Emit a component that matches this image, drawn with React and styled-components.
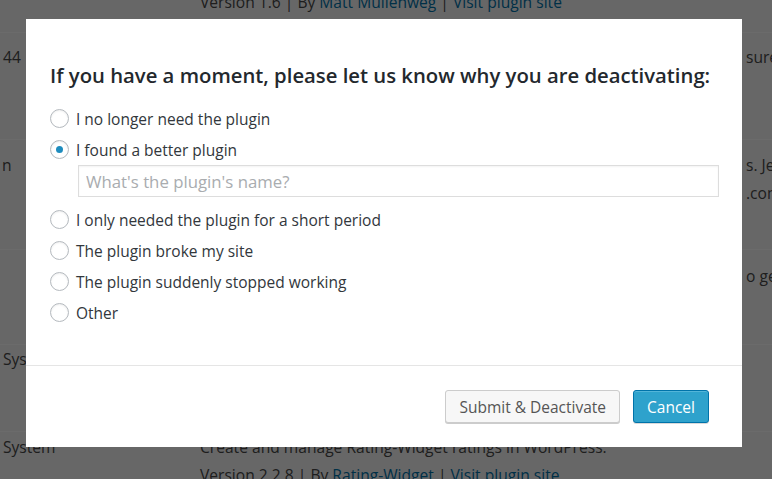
import React, { useState } from "react";
import styled, { createGlobalStyle } from "styled-components";

const GlobalStyle = createGlobalStyle`
  html, body {
    margin: 0;
    padding: 0;
    overflow: hidden;
    background-color: #f1f1f1;
  }
  * {
    box-sizing: border-box;
  }
`;

const reasons = [
  "I no longer need the plugin",
  "I found a better plugin",
  "I only needed the plugin for a short period",
  "The plugin broke my site",
  "The plugin suddenly stopped working",
  "Other",
];

// plugin table behind the modal backdrop
const rows = [
  { height: 33, top: -8, name: "", desc: [["Version 1.6 | By ", false], ["Matt Mullenweg", true], [" | ", false], ["Visit plugin site", true]], edge: [] },
  { height: 107, top: 14, name: "44", desc: [], edge: ["sure"] },
  { height: 110, top: 15, name: "n", nameShift: -1, desc: [], edge: ["s. Je", ".com"] },
  { height: 95, top: 16, name: "", desc: [], edge: ["o get"] },
  { height: 87, top: 4, name: "Sys", desc: [], edge: [] },
  { height: 60, top: 5, name: "System", desc: [["Create and manage Rating-Widget ratings in WordPress.", false]], desc2: [["Version 2.2.8 | By ", false], ["Rating-Widget", true], [" | ", false], ["Visit plugin site", true]], edge: [] },
];

function Segments({ parts }) {
  return parts.map(([t, link], j) => (link ? <PluginLink key={j}>{t}</PluginLink> : <span key={j}>{t}</span>));
}

export default function App() {
  const [choice, setChoice] = useState(1);

  return (
    <Page>
      <GlobalStyle />
      <PluginTable>
        {rows.map((row, i) => (
          <TableRow key={i} height={row.height} last={i === rows.length - 1}>
            <NameCell top={row.top}>
              <span style={{ marginLeft: row.nameShift || 0 }}>{row.name}</span>
            </NameCell>
            <DescCell top={row.top}>
              <Line>
                <Segments parts={row.desc} />
              </Line>
              {row.desc2 && (
                <Line>
                  <Segments parts={row.desc2} />
                </Line>
              )}
            </DescCell>
            <EdgeCell top={row.top}>
              {row.edge.map((t, j) => (
                <Line key={j}>{t}</Line>
              ))}
            </EdgeCell>
          </TableRow>
        ))}
      </PluginTable>

      <Backdrop />

      <Modal>
        <ModalBody>
          <Heading>If you have a moment, please let us know why you are deactivating:</Heading>
          <ReasonList>
            {reasons.map((r, i) => (
              <React.Fragment key={r}>
                <ReasonRow onClick={() => setChoice(i)}>
                  <Radio checked={choice === i} />
                  <ReasonLabel>{r}</ReasonLabel>
                </ReasonRow>
                {i === 1 && choice === 1 && <NameInput placeholder="What's the plugin's name?" />}
              </React.Fragment>
            ))}
          </ReasonList>
        </ModalBody>
        <ModalFooter>
          <Button>Submit &amp; Deactivate</Button>
          <Button primary>Cancel</Button>
        </ModalFooter>
      </Modal>
    </Page>
  );
}

//======================== background table ========================
const Page = styled.div`
  position: relative;
  width: 772px;
  height: 479px;
  overflow: hidden;
  background-color: #f1f1f1;
`;

const PluginTable = styled.div`
  display: flex;
  flex-direction: column;
  font-family: "Open Sans", "Liberation Sans", sans-serif;
  font-size: 15.6px;
  line-height: 20px;
  color: #484848;
`;

const TableRow = styled.div`
  display: grid;
  grid-template-columns: 200px 1fr 28px;
  height: ${(p) => p.height}px;
  flex-shrink: 0;
  background-color: #f6f6f6;
  border-bottom: ${(p) => (p.last ? "none" : "1px solid #ffffff")};
  overflow: hidden;
`;

const NameCell = styled.div`
  padding: ${(p) => Math.max(p.top, 0)}px 0 0 3px;
  margin-top: ${(p) => Math.min(p.top, 0)}px;
  white-space: nowrap;
`;

const DescCell = styled.div`
  padding-top: ${(p) => Math.max(p.top, 0)}px;
  margin-top: ${(p) => Math.min(p.top, 0)}px;
  white-space: nowrap;
`;

const EdgeCell = styled.div`
  padding-top: ${(p) => Math.max(p.top, 0)}px;
  white-space: nowrap;
  overflow: hidden;
  padding-left: 2px;
`;

const Line = styled.div`
  height: 20px;
  & + & {
    margin-top: 8px;
  }
`;

const PluginLink = styled.span`
  color: #0073aa;
`;

const Backdrop = styled.div`
  position: absolute;
  top: 0;
  left: 0;
  width: 772px;
  height: 479px;
  background-color: rgba(0, 0, 0, 0.58);
`;

//======================== modal ========================
const Modal = styled.div`
  position: absolute;
  top: 19px;
  left: 26px;
  width: 716px;
  height: 428px;
  background: #ffffff;
  display: flex;
  flex-direction: column;
  font-family: "Open Sans", "Liberation Sans", sans-serif;
`;

const ModalBody = styled.div`
  flex: 1;
  padding: 42px 24px 0 24px;
`;

const Heading = styled.h2`
  margin: 0;
  font-size: 20.3px;
  line-height: 28px;
  font-weight: 600;
  color: #23282d;
  white-space: nowrap;
`;

const ReasonList = styled.div`
  display: flex;
  flex-direction: column;
  margin-top: 14px;
`;

const ReasonRow = styled.label`
  display: flex;
  align-items: center;
  height: 31px;
  gap: 7px;
  cursor: pointer;
`;

const Radio = styled.span`
  position: relative;
  width: 19px;
  height: 19px;
  border-radius: 50%;
  border: 1px solid #b4b9be;
  background: #fff;
  box-shadow: inset 0 1px 2px rgba(0, 0, 0, 0.07);
  flex-shrink: 0;
  &::after {
    content: "";
    display: ${(p) => (p.checked ? "block" : "none")};
    position: absolute;
    top: 50%;
    left: 50%;
    width: 7px;
    height: 7px;
    margin: -3.5px 0 0 -3.5px;
    border-radius: 50%;
    background: #1e8cbe;
  }
`;

const ReasonLabel = styled.span`
  font-size: 15.5px;
  color: #32373c;
`;

const NameInput = styled.input`
  margin: 0 0 7px 28px;
  width: 641px;
  height: 32px;
  flex-shrink: 0;
  border: 1px solid #dddddd;
  box-shadow: inset 0 1px 2px rgba(0, 0, 0, 0.05);
  padding: 0 7px;
  font-family: "Open Sans", "Liberation Sans", sans-serif;
  font-size: 16.8px;
  color: #32373c;
  outline: none;
  &::placeholder {
    color: #a9acaf;
  }
`;

const ModalFooter = styled.div`
  display: flex;
  justify-content: flex-end;
  gap: 13px;
  height: 82px;
  padding: 24px 33px 0 0;
  border-top: 1px solid #e5e5e5;
`;

const Button = styled.button`
  height: 33px;
  padding: 0 13px;
  border-radius: 3px;
  border: 1px solid ${(p) => (p.primary ? "#0073aa" : "#cccccc")};
  background: ${(p) => (p.primary ? "#2ea2cc" : "#f7f7f7")};
  color: ${(p) => (p.primary ? "#ffffff" : "#555555")};
  box-shadow: ${(p) => (p.primary ? "inset 0 1px 0 rgba(120,200,230,0.5), 0 1px 0 rgba(0,0,0,0.15)" : "0 1px 0 #cccccc")};
  font-family: "Open Sans", "Liberation Sans", sans-serif;
  font-size: 15.5px;
  cursor: pointer;
`;
